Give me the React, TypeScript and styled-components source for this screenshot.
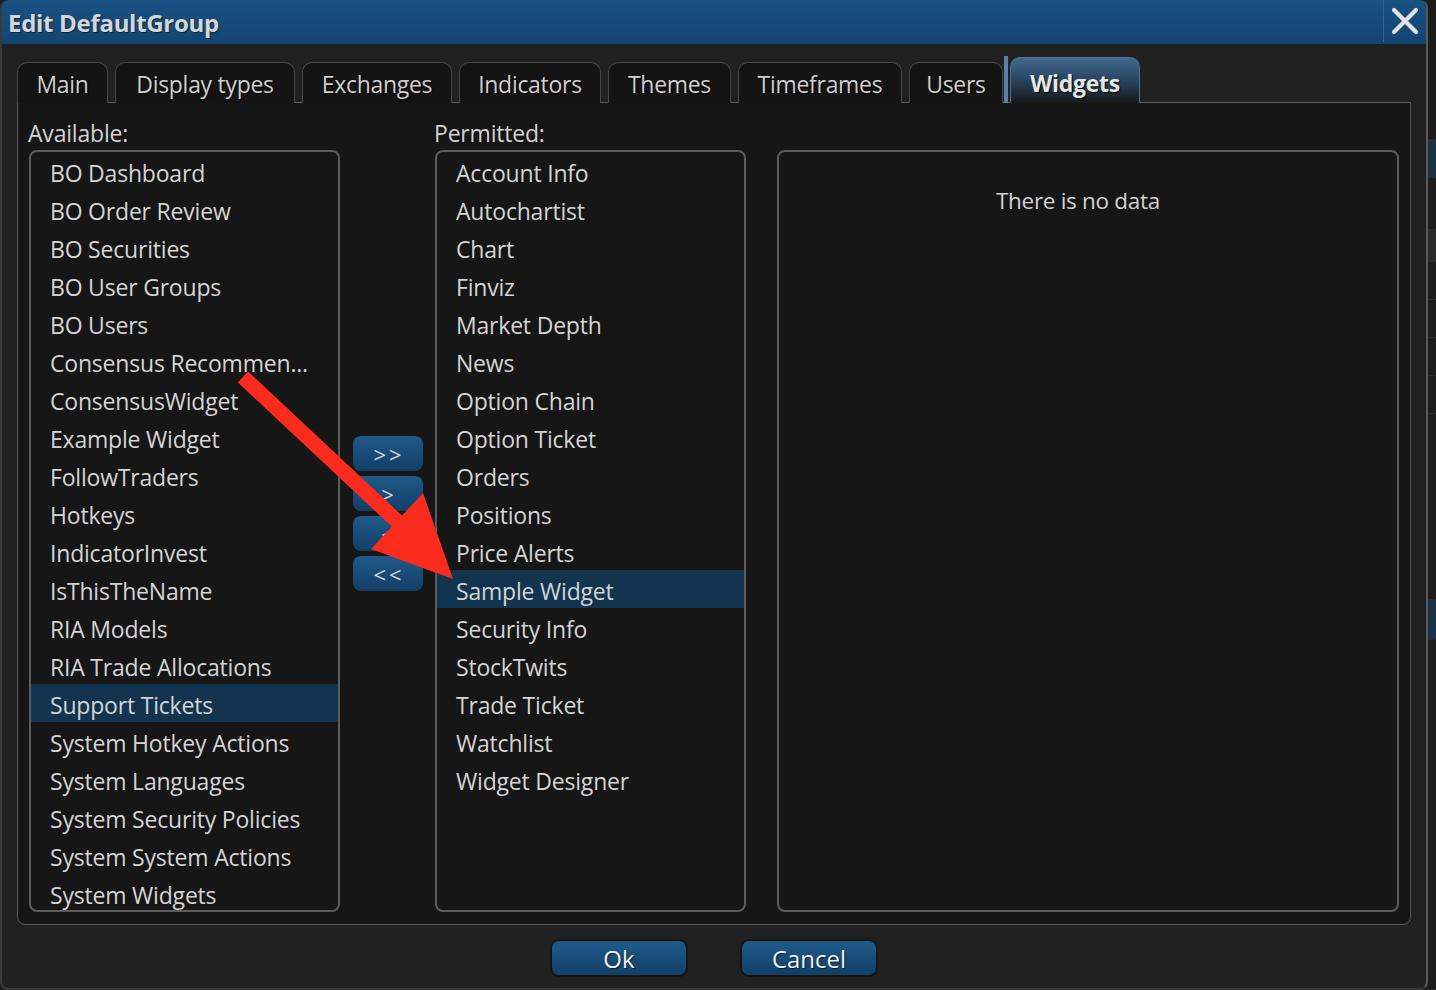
import React from "react";
import styled, { createGlobalStyle } from "styled-components";

const Global = createGlobalStyle`
  html, body { margin: 0; padding: 0; background: #1c1c1c; }
  body { font-family: "Open Sans", "Noto Sans", sans-serif; overflow: hidden; }
  * { box-sizing: border-box; }
`;

const Page = styled.div`
  display: flex;
  width: 1436px;
  height: 990px;
  overflow: hidden;
`;

const Window = styled.div`
  position: relative;
  width: 1428px;
  height: 990px;
  display: flex;
  flex-direction: column;
  background: #212121;
  border-left: 2px solid #3a3a3a;
  border-right: 2px solid #595959;
  border-bottom: 2px solid #3a3a3a;
  border-radius: 8px;
  overflow: hidden;
`;

const TitleBar = styled.div`
  height: 44px;
  flex: none;
  display: flex;
  align-items: center;
  background: linear-gradient(#1a5283, #124471);
  border-radius: 6px 6px 0 0;
`;

const Title = styled.div`
  flex: 1;
  padding-left: 6px;
  font-size: 24px;
  font-weight: 700;
  color: #d6d6d6;
  letter-spacing: -0.3px;
  text-shadow: 1px 1px 1px rgba(0, 0, 0, 0.45);
`;

const CloseBtn = styled.div`
  width: 43px;
  height: 42px;
  align-self: flex-start;
  border-left: 1px solid #2c6594;
  display: flex;
  align-items: center;
  justify-content: center;
`;

const Backdrop = styled.div`
  flex: 1;
  display: flex;
  flex-direction: column;
  background: #1e1e1e;
`;

const BackBlock = styled.div<{ $h: number; $c: string }>`
  height: ${(p) => p.$h}px;
  flex: none;
  background: ${(p) => p.$c};
  border-bottom: 1px solid #2b2b2b;
`;

const Body = styled.div`
  flex: 1;
  display: flex;
  flex-direction: column;
  padding: 12px 15px 0 15px;
`;

const TabStrip = styled.div`
  display: flex;
  align-items: flex-end;
  gap: 7px;
  height: 47px;
  position: relative;
  z-index: 2;
  margin-bottom: -1px;
`;

const Tab = styled.div<{ $w: number; $active?: boolean }>`
  position: relative;
  width: ${(p) => p.$w}px;
  height: ${(p) => (p.$active ? 46 : 41)}px;
  display: flex;
  align-items: center;
  justify-content: center;
  padding-top: ${(p) => (p.$active ? 5 : 2)}px;
  border: 1px solid #474747;
  border-bottom: none;
  border-radius: 10px 10px 0 0;
  background: ${(p) =>
    p.$active ? "linear-gradient(#42698f 0%, #2a4865 45%, #17191b 100%)" : "#141414"};
  color: ${(p) => (p.$active ? "#e6e6e6" : "#cfcfcf")};
  font-size: 23px;
  font-weight: ${(p) => (p.$active ? 700 : 400)};
  letter-spacing: -0.3px;
  text-shadow: 1px 1px 1px #000;
  ${(p) =>
    p.$active
      ? `border-color: #4e6f90; &::before { content: ""; position: absolute; left: -7px; top: -2px; bottom: 0; width: 4px; background: #5b80aa; }`
      : ""}
`;

const Panel = styled.div`
  height: 823px;
  flex: none;
  border: 1px solid #5a5a5a;
  border-radius: 0 0 8px 8px;
  background: #161616;
  padding: 0 11px 11px 11px;
  display: grid;
  grid-template-columns: 311px 95px 311px 31px 622px;
  grid-template-rows: 47px 762px;
`;

const Label = styled.div<{ $col: number }>`
  grid-column: ${(p) => p.$col};
  grid-row: 1;
  padding-top: 15px;
  line-height: 30px;
  font-size: 23px;
  color: #d2d2d2;
  margin-left: -1px;
  letter-spacing: -0.2px;
`;

const ListBox = styled.div<{ $col: number }>`
  grid-column: ${(p) => p.$col};
  grid-row: 2;
  border: 2px solid #5c5c5c;
  border-radius: 8px;
  overflow: hidden;
  background: #161616;
`;

const Row = styled.div<{ $selected?: boolean }>`
  height: 38px;
  line-height: 38px;
  padding: 2px 0 0 19px;
  font-size: 23px;
  color: #d4d4d4;
  letter-spacing: -0.2px;
  white-space: nowrap;
  background: ${(p) => (p.$selected ? "#12344f" : "transparent")};
`;

const MoveColumn = styled.div`
  grid-column: 2;
  grid-row: 1 / span 2;
  align-self: center;
  justify-self: center;
  display: flex;
  flex-direction: column;
  gap: 5px;
  margin-top: 12px;
`;

const MoveBtn = styled.div`
  width: 70px;
  height: 35px;
  border-radius: 8px;
  background: linear-gradient(#1f5a89, #123e66);
  color: #d6d6d6;
  font-size: 22px;
  letter-spacing: 3px;
  padding-left: 3px;
  display: flex;
  align-items: center;
  justify-content: center;
`;

const InfoBox = styled.div`
  grid-column: 5;
  grid-row: 2;
  border: 2px solid #5c5c5c;
  border-radius: 8px;
  padding: 33px 20px 0 0;
  text-align: center;
  font-size: 22.5px;
  color: #d2d2d2;
  letter-spacing: -0.3px;
`;

const Footer = styled.div`
  display: flex;
  justify-content: center;
  gap: 52px;
  padding-top: 14px;
`;

const DialogBtn = styled.div`
  width: 138px;
  height: 38px;
  border: 2px solid #141414;
  border-radius: 9px;
  background: linear-gradient(#1e5b8b, #114068);
  color: #f2f2f2;
  font-size: 24px;
  display: flex;
  align-items: center;
  justify-content: center;
  text-shadow: 1px 1px 1px rgba(0, 0, 0, 0.6);
`;

const Annotation = styled.svg`
  position: absolute;
  left: -2px;
  top: 0;
  pointer-events: none;
  z-index: 10;
`;

const tabs = [
  { name: "Main", w: 91 },
  { name: "Display types", w: 180 },
  { name: "Exchanges", w: 150 },
  { name: "Indicators", w: 142 },
  { name: "Themes", w: 123 },
  { name: "Timeframes", w: 164 },
  { name: "Users", w: 94 },
  { name: "Widgets", w: 130, active: true },
];

const available = [
  "BO Dashboard",
  "BO Order Review",
  "BO Securities",
  "BO User Groups",
  "BO Users",
  "Consensus Recommen...",
  "ConsensusWidget",
  "Example Widget",
  "FollowTraders",
  "Hotkeys",
  "IndicatorInvest",
  "IsThisTheName",
  "RIA Models",
  "RIA Trade Allocations",
  "Support Tickets",
  "System Hotkey Actions",
  "System Languages",
  "System Security Policies",
  "System System Actions",
  "System Widgets",
];

const permitted = [
  "Account Info",
  "Autochartist",
  "Chart",
  "Finviz",
  "Market Depth",
  "News",
  "Option Chain",
  "Option Ticket",
  "Orders",
  "Positions",
  "Price Alerts",
  "Sample Widget",
  "Security Info",
  "StockTwits",
  "Trade Ticket",
  "Watchlist",
  "Widget Designer",
];

export default function App() {
  return (
    <Page>
      <Global />
      <Window>
        <TitleBar>
          <Title>Edit DefaultGroup</Title>
          <CloseBtn>
            <svg width="28" height="28" viewBox="0 0 28 28">
              <path d="M3 3 L25 25 M25 3 L3 25" stroke="#e2e2e2" strokeWidth="4.2" strokeLinecap="round" />
            </svg>
          </CloseBtn>
        </TitleBar>
        <Body>
          <TabStrip>
            {tabs.map((t) => (
              <Tab key={t.name} $w={t.w} $active={t.active}>
                {t.name}
              </Tab>
            ))}
          </TabStrip>
          <Panel>
            <Label $col={1}>Available:</Label>
            <Label $col={3}>Permitted:</Label>
            <ListBox $col={1}>
              {available.map((a) => (
                <Row key={a} $selected={a === "Support Tickets"}>
                  {a}
                </Row>
              ))}
            </ListBox>
            <MoveColumn>
              <MoveBtn>&gt;&gt;</MoveBtn>
              <MoveBtn>&gt;</MoveBtn>
              <MoveBtn>&lt;</MoveBtn>
              <MoveBtn>&lt;&lt;</MoveBtn>
            </MoveColumn>
            <ListBox $col={3}>
              {permitted.map((a) => (
                <Row key={a} $selected={a === "Sample Widget"}>
                  {a}
                </Row>
              ))}
            </ListBox>
            <InfoBox>There is no data</InfoBox>
          </Panel>
          <Footer>
            <DialogBtn>Ok</DialogBtn>
            <DialogBtn>Cancel</DialogBtn>
          </Footer>
        </Body>
        <Annotation width="500" height="620" viewBox="0 0 500 620">
          <line x1="243" y1="377" x2="400" y2="524" stroke="#fb2b1e" strokeWidth="15" />
          <polygon points="423,493 371,549 453,579" fill="#fb2b1e" />
        </Annotation>
      </Window>
      <Backdrop>
        <BackBlock $h={140} $c="#1c1c1c" />
        <BackBlock $h={38} $c="#1b3247" />
        <BackBlock $h={52} $c="#1d1d1d" />
        <BackBlock $h={32} $c="#2a2a2a" />
        <BackBlock $h={38} $c="#1d1d1d" />
        <BackBlock $h={38} $c="#1d1d1d" />
        <BackBlock $h={38} $c="#1d1d1d" />
        <BackBlock $h={38} $c="#1d1d1d" />
        <BackBlock $h={186} $c="#1d1d1d" />
        <BackBlock $h={40} $c="#1b3247" />
        <BackBlock $h={350} $c="#1d1d1d" />
      </Backdrop>
    </Page>
  );
}
